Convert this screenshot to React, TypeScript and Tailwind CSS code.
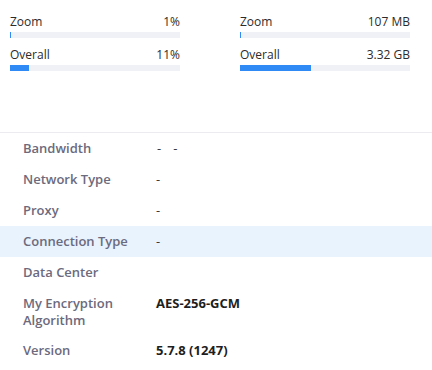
const font = { fontFamily: '"Open Sans", "Noto Sans", sans-serif' }

type Usage = { label: string; value: string; pct: number }

const left: Usage[] = [
  { label: 'Zoom', value: '1%', pct: 0.6 },
  { label: 'Overall', value: '11%', pct: 11 },
]
const right: Usage[] = [
  { label: 'Zoom', value: '107 MB', pct: 0.6 },
  { label: 'Overall', value: '3.32 GB', pct: 42 },
]

function UsageList({ items }: { items: Usage[] }) {
  return (
    <div className="flex flex-col gap-[9px]">
      {items.map(item => (
        <div key={item.label}>
          <div className="flex justify-between text-[12px] leading-[16px] text-[#2b2b2b]">
            <span>{item.label}</span>
            <span>{item.value}</span>
          </div>
          <div className="mt-[2px] h-[6px] bg-[#f0f1f6]">
            <div className="h-full bg-[#2f8af5]" style={{ width: `${item.pct}%`, minWidth: 1 }} />
          </div>
        </div>
      ))}
    </div>
  )
}

const rows: { label: string; value: React.ReactNode; highlight?: boolean; bold?: boolean }[] = [
  {
    label: 'Bandwidth',
    value: (
      <span className="flex gap-[12px] pl-[1px]">
        <span>-</span>
        <span>-</span>
      </span>
    ),
  },
  { label: 'Network Type', value: '-' },
  { label: 'Proxy', value: '-' },
  { label: 'Connection Type', value: '-', highlight: true },
  { label: 'Data Center', value: '' },
  { label: 'My Encryption Algorithm', value: 'AES-256-GCM', bold: true },
  { label: 'Version', value: '5.7.8 (1247)', bold: true },
]

export default function App() {
  return (
    <div className="h-[370px] w-[432px] overflow-hidden bg-white" style={font}>
      <div className="h-[133px] border-b border-[#ebebf0] pt-[14px] pl-[10px]">
        <div className="grid grid-cols-[170px_170px] gap-x-[60px]">
          <UsageList items={left} />
          <UsageList items={right} />
        </div>
      </div>
      <div className="flex flex-col">
        {rows.map(row => (
          <div
            key={row.label}
            className={`grid grid-cols-[133px_1fr] py-[7px] pl-[23px] text-[13px] leading-[17px] ${row.highlight ? 'bg-[#e8f3fd]' : ''} ${row.label === 'Version' ? 'pt-[6px]' : ''}`}
          >
            <span className="w-[110px] font-semibold text-[#6c6a7d]">{row.label}</span>
            <span className={row.bold ? 'font-bold text-[#1e1e1e]' : 'text-[#3a3a3a]'}>{row.value}</span>
          </div>
        ))}
      </div>
    </div>
  )
}
